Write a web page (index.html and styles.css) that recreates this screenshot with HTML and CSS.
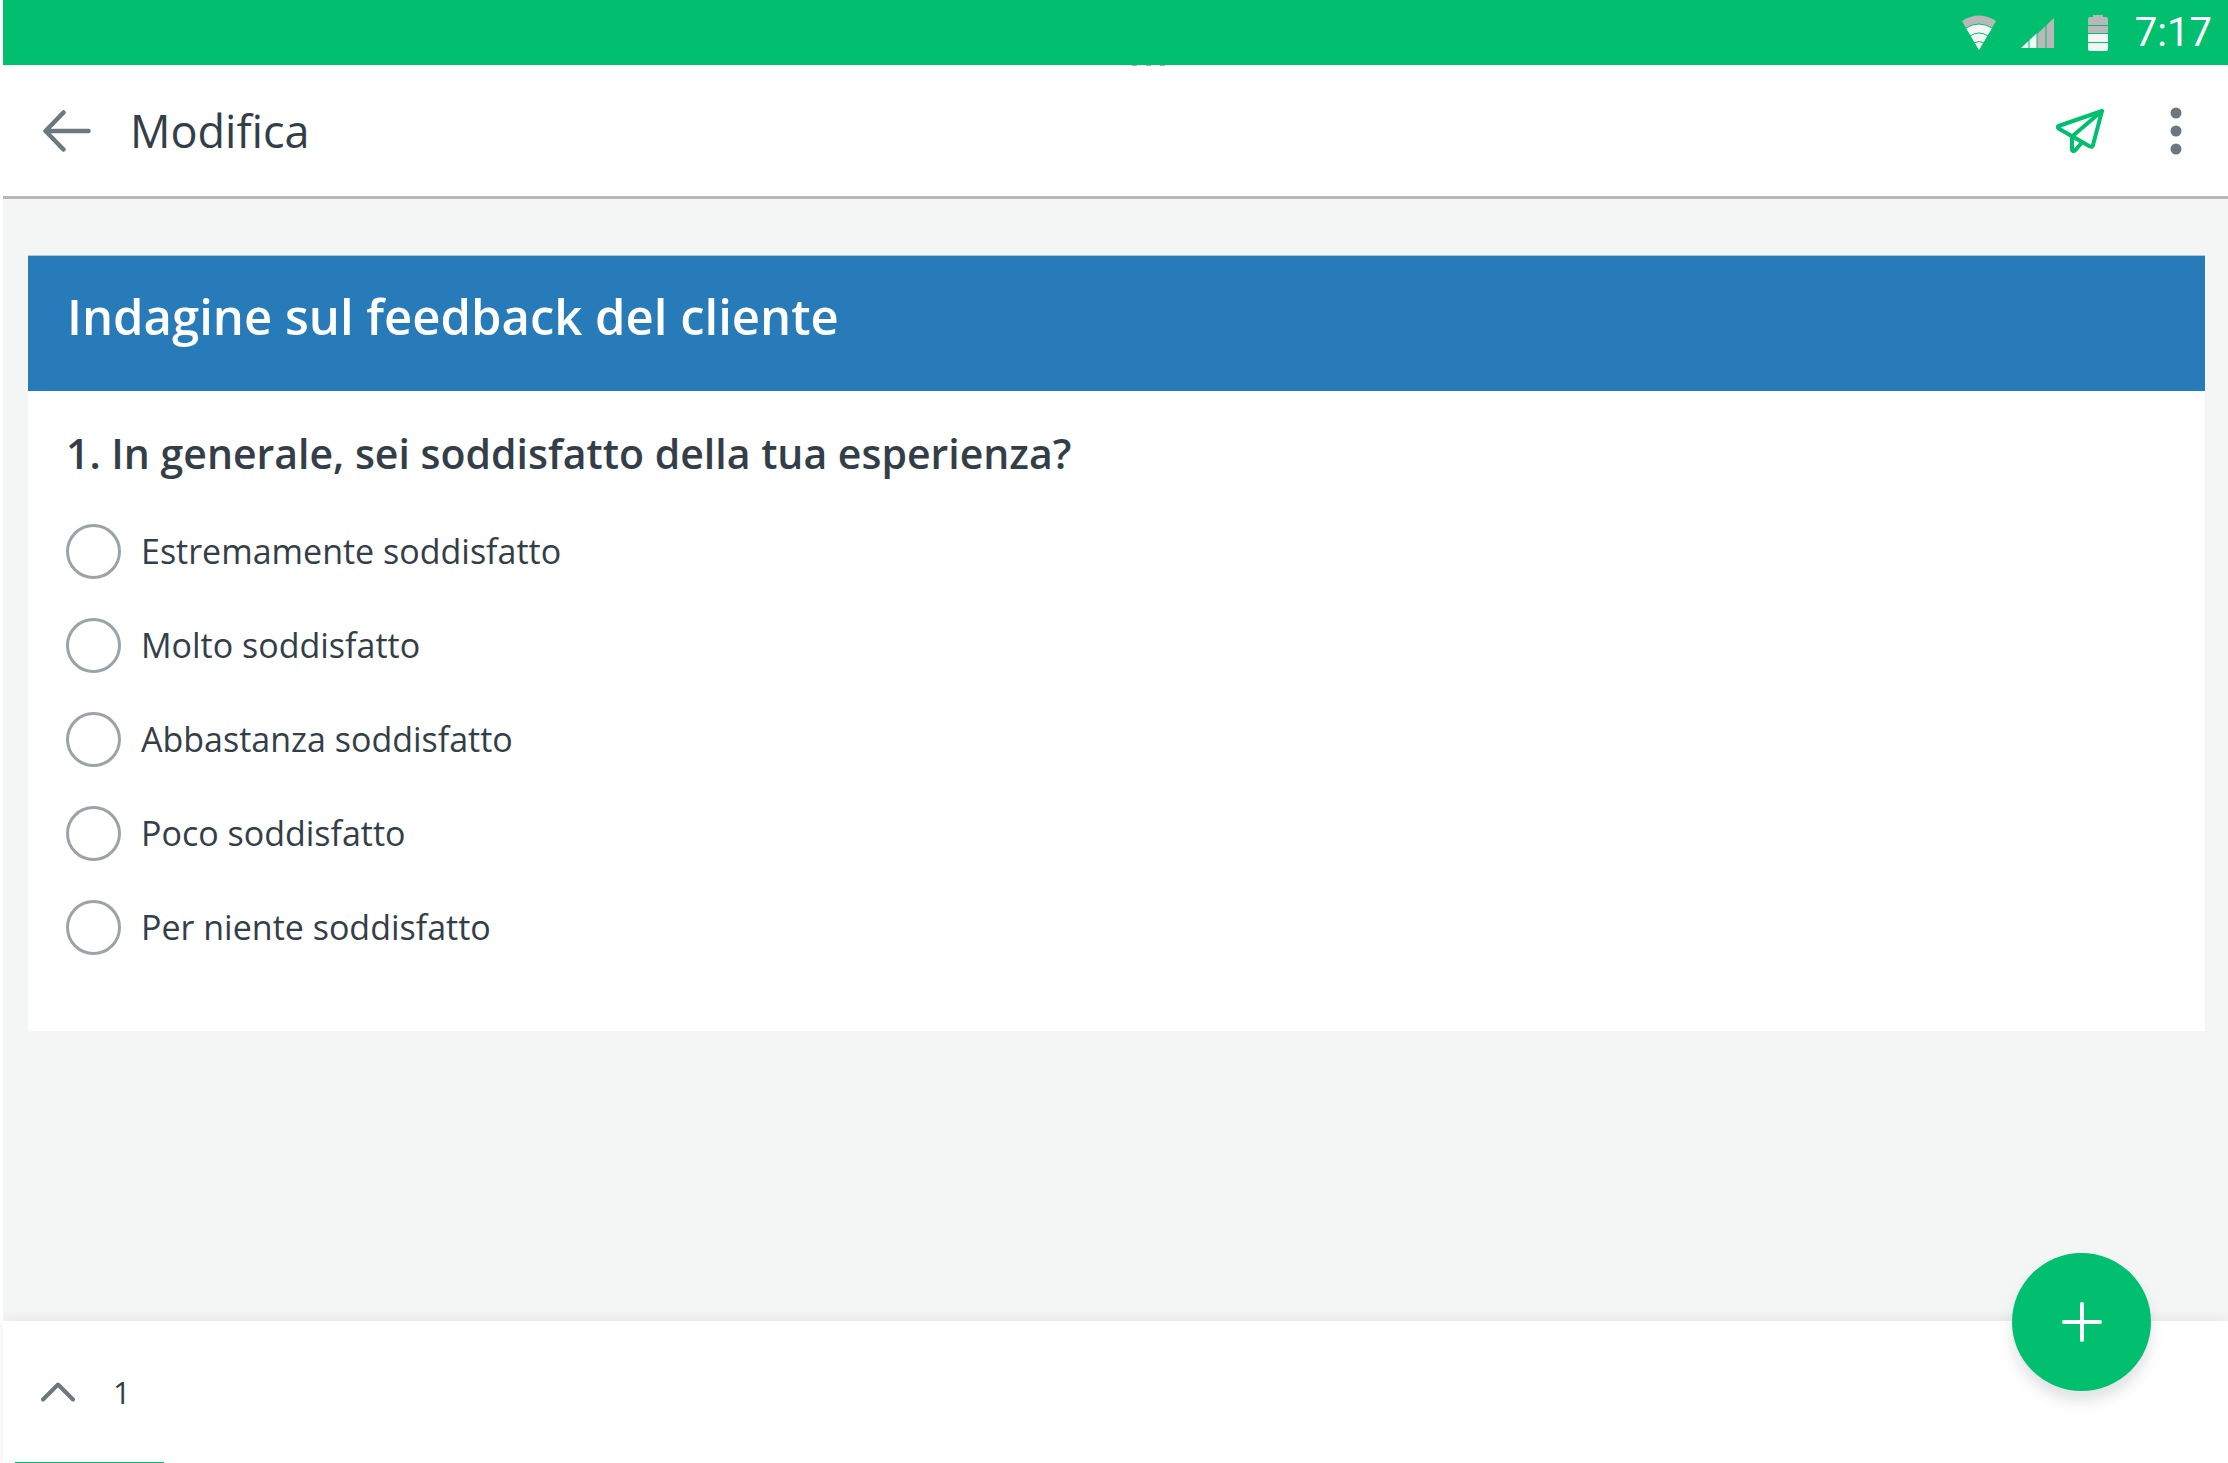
FILE: index.html
```html
<!DOCTYPE html>
<html lang="it">
<head>
    <meta charset="UTF-8">
    <meta name="viewport" content="width=device-width, initial-scale=1.0">
    <title>Modifica</title>
    <link rel="stylesheet" href="styles.css">
</head>
<body>
    <div class="status-bar">
        <svg class="status-wifi" width="34" height="36" viewBox="0 0 34 36">
            <path d="M0 6 Q17 -5 34 6 L17 35 Z" fill="#b8b8b8"/>
            <path d="M4 13 Q17 5 30 13 L17 35 Z" fill="#f4f5f5"/>
            <path d="M4 13 Q17 5 30 13 M8 21 Q17 15 26 21 M12 28 Q17 25 22 28" fill="none" stroke="#00bf6f" stroke-width="1"/>
        </svg>
        <svg class="status-signal" width="34" height="36" viewBox="0 0 34 36">
            <path d="M17 19 L34 3 V33 H17 Z" fill="#b8b8b8"/>
            <path d="M1 33 L17 18 V33 Z" fill="#f4f5f5"/>
            <path d="M9 3 V33 M17 3 V33 M26 3 V33" stroke="#00bf6f" stroke-width="1"/>
        </svg>
        <svg class="status-battery" width="20" height="36" viewBox="0 0 20 36">
            <path d="M5 0 H15 V2 H18 Q20 2 20 4 V18 H0 V4 Q0 2 2 2 H5 Z" fill="#b8b8b8"/>
            <path d="M0 19 H20 V34 Q20 36 18 36 H2 Q0 36 0 34 Z" fill="#f4f5f5"/>
            <path d="M0 10.5 H20 M0 27.5 H20 M0 18.5 H20" stroke="#00bf6f" stroke-width="1"/>
        </svg>
        <span class="clock">7:17</span>
    </div>

    <header class="app-bar">
        <span class="handle"><i></i><i></i><i></i></span>
        <button class="icon-button" type="button" aria-label="Indietro">
            <svg width="48" height="42" viewBox="0 0 48 42">
                <path d="M20.5 2.5 L2.5 21 L20.5 39.5 M2.5 21 H45.5" fill="none" stroke="#6b787f" stroke-width="4.5" stroke-linecap="round" stroke-linejoin="round"/>
            </svg>
        </button>
        <h1>Modifica</h1>
        <div class="actions">
            <button class="icon-button" type="button" aria-label="Invia">
                <svg width="48" height="44" viewBox="0 0 48 44">
                    <path d="M46 2 L2.5 17 Q1 18 2.5 19.5 L34 37.5 Q36.5 38.5 37 36 Z M46 2 L16 27.5 V41 Q17 43 19 41.5 L26 33.5" fill="none" stroke="#00bf6f" stroke-width="4" stroke-linecap="round" stroke-linejoin="round"/>
                </svg>
            </button>
            <button class="icon-button" type="button" aria-label="Altro">
                <svg width="12" height="48" viewBox="0 0 12 48" fill="#6b787f">
                    <circle cx="6" cy="6" r="5.5"/>
                    <circle cx="6" cy="24" r="5.5"/>
                    <circle cx="6" cy="42" r="5.5"/>
                </svg>
            </button>
        </div>
    </header>

    <main>
        <section class="survey">
            <h2>Indagine sul feedback del cliente</h2>
            <fieldset class="question">
                <legend>1. In generale, sei soddisfatto della tua esperienza?</legend>
                <label class="answer"><input type="radio" name="esperienza">Estremamente soddisfatto</label>
                <label class="answer"><input type="radio" name="esperienza">Molto soddisfatto</label>
                <label class="answer"><input type="radio" name="esperienza">Abbastanza soddisfatto</label>
                <label class="answer"><input type="radio" name="esperienza">Poco soddisfatto</label>
                <label class="answer"><input type="radio" name="esperienza">Per niente soddisfatto</label>
            </fieldset>
        </section>
    </main>

    <footer class="pages">
        <div class="page-row">
            <button class="icon-button" type="button" aria-label="Mostra pagine">
                <svg width="34" height="20" viewBox="0 0 34 20">
                    <path d="M2 17.5 L17 2.5 L32 17.5" fill="none" stroke="#6b787f" stroke-width="4" stroke-linecap="round" stroke-linejoin="round"/>
                </svg>
            </button>
            <span class="page-number">1</span>
        </div>
        <div class="page-tab"></div>
        <button class="add-button" type="button" aria-label="Aggiungi">
            <svg width="40" height="40" viewBox="0 0 40 40">
                <path d="M20 2 V38 M2 20 H38" stroke="#fff" stroke-width="4" stroke-linecap="round"/>
            </svg>
        </button>
    </footer>
</body>
</html>
```
FILE: styles.css
```css
* {
    box-sizing: border-box;
}

body {
    margin: 0;
    padding-left: 3px;
    min-height: 100vh;
    display: flex;
    flex-direction: column;
    background: #fff;
    color: #333e48;
    font-family: "Open Sans", "Noto Sans", Arial, sans-serif;
}

h1, h2 {
    margin: 0;
}

.icon-button {
    display: flex;
    padding: 0;
    border: none;
    background: none;
    cursor: pointer;
}

/* status bar */
.status-bar {
    display: flex;
    justify-content: flex-end;
    align-items: center;
    height: 65px;
    padding-right: 16px;
    background: #00bf6f;
    color: #fff;
}

.status-signal {
    margin-left: 24px;
}

.status-battery {
    margin-left: 34px;
}

.clock {
    margin-left: 27px;
    font-family: Roboto, Arial, sans-serif;
    font-size: 40px;
    line-height: 65px;
}

/* app bar */
.app-bar {
    position: relative;
    display: flex;
    align-items: center;
    height: 134px;
    padding: 0 46px 0 40px;
    border-bottom: 3px solid #b8b8b8;
}

.app-bar h1 {
    margin-left: 39px;
    font-size: 45px;
    font-weight: 400;
}

.actions {
    display: flex;
    align-items: center;
    gap: 66px;
    margin-left: auto;
}

.handle {
    position: absolute;
    top: 0;
    left: 50%;
    display: flex;
    gap: 9px;
    margin-left: 16px;
}

.handle i {
    width: 5px;
    height: 1px;
    background: #8fb89f;
}

/* survey */
main {
    flex: 1;
    padding: 56px 23px 56px 25px;
    background: #f4f5f5;
}

.survey {
    background: #fff;
}

.survey h2 {
    height: 136px;
    padding: 31px 39px;
    border-top: 1px solid #a5c9e0;
    background: #267bb8;
    color: #fff;
    font-size: 49px;
    font-weight: 600;
    line-height: 58px;
}

.question {
    display: flex;
    flex-direction: column;
    gap: 39px;
    margin: 0;
    padding: 0 38px 76px;
    border: none;
}

.question legend {
    padding: 38px 0 46px;
    font-size: 41px;
    font-weight: 600;
    line-height: 49px;
}

.answer {
    display: flex;
    align-items: center;
    gap: 20px;
    font-size: 34px;
    line-height: 55px;
}

.answer input {
    appearance: none;
    width: 55px;
    height: 55px;
    margin: 0;
    border: 3px solid #9ba3a8;
    border-radius: 50%;
    background: #fff;
}

.answer input:checked {
    border: 16px solid #00bf6f;
}

/* page strip */
.pages {
    position: relative;
    background: #fff;
    box-shadow: 0 0 12px rgba(51, 62, 72, 0.1);
}

.page-row {
    display: flex;
    align-items: center;
    gap: 38px;
    height: 141px;
    padding-left: 38px;
}

.page-number {
    font-size: 31px;
}

.page-tab {
    width: 149px;
    height: 1px;
    margin-left: 12px;
    background: #00bf6f;
}

.add-button {
    position: absolute;
    top: -68px;
    right: 77px;
    display: flex;
    align-items: center;
    justify-content: center;
    width: 139px;
    height: 138px;
    padding: 0;
    border: none;
    border-radius: 50%;
    background: #00bf6f;
    box-shadow: 0 10px 14px rgba(51, 62, 72, 0.15);
    cursor: pointer;
}
```
